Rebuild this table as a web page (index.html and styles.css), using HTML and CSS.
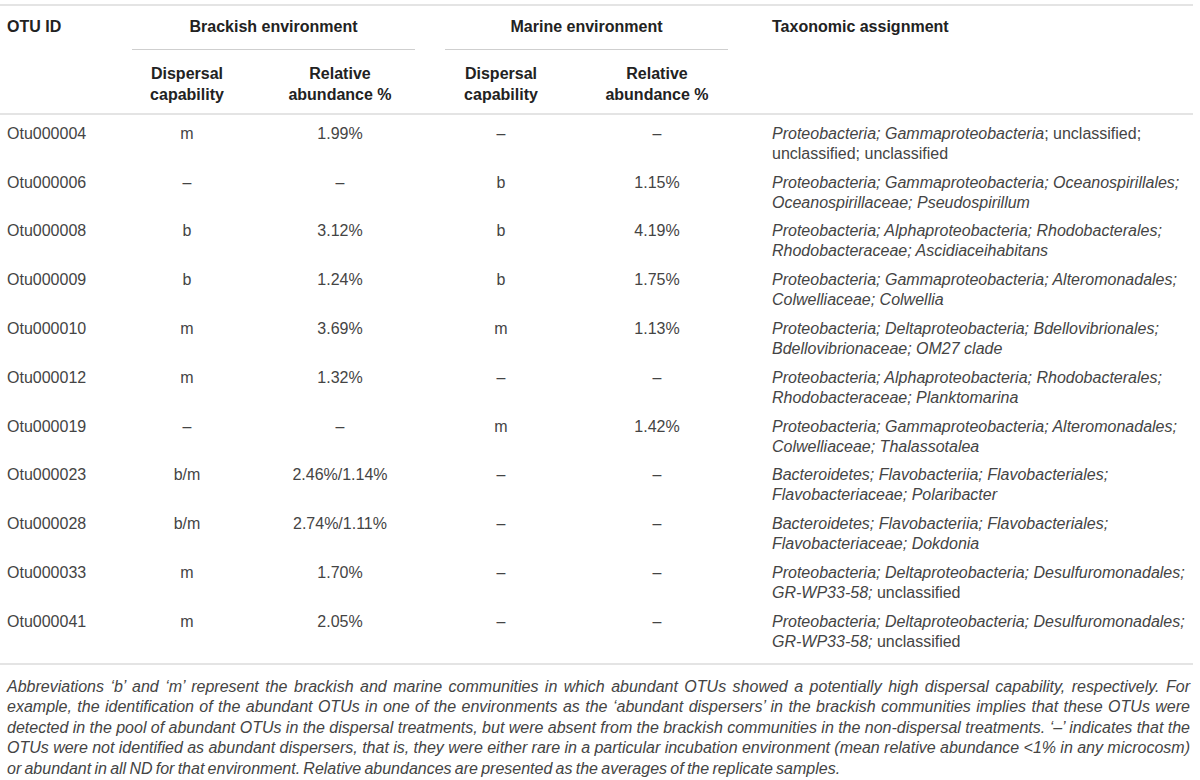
FILE: index.html
```html
<!DOCTYPE html>
<html lang="en">
<head>
    <meta charset="UTF-8">
    <meta name="viewport" content="width=device-width, initial-scale=1.0">
    <title>Abundant dispersers</title>
    <link rel="stylesheet" href="styles.css">
</head>
<body>
    <div class="table">
        <div class="head">
            <div class="otu">OTU ID</div>
            <div class="group brackish">Brackish environment</div>
            <div class="group marine">Marine environment</div>
            <div class="tax">Taxonomic assignment</div>
            <div class="sub b1">Dispersal<br>capability</div>
            <div class="sub b2">Relative<br>abundance %</div>
            <div class="sub m1">Dispersal<br>capability</div>
            <div class="sub m2">Relative<br>abundance %</div>
        </div>

        <div class="rows">
            <div class="row">
                <div class="id">Otu000004</div>
                <div class="b1">m</div>
                <div class="b2">1.99%</div>
                <div class="m1">–</div>
                <div class="m2">–</div>
                <div class="t"><i>Proteobacteria; Gammaproteobacteria</i>; unclassified;<br>unclassified; unclassified</div>
            </div>
            <div class="row">
                <div class="id">Otu000006</div>
                <div class="b1">–</div>
                <div class="b2">–</div>
                <div class="m1">b</div>
                <div class="m2">1.15%</div>
                <div class="t"><i>Proteobacteria; Gammaproteobacteria; Oceanospirillales;<br>Oceanospirillaceae; Pseudospirillum</i></div>
            </div>
            <div class="row">
                <div class="id">Otu000008</div>
                <div class="b1">b</div>
                <div class="b2">3.12%</div>
                <div class="m1">b</div>
                <div class="m2">4.19%</div>
                <div class="t"><i>Proteobacteria; Alphaproteobacteria; Rhodobacterales;<br>Rhodobacteraceae; Ascidiaceihabitans</i></div>
            </div>
            <div class="row">
                <div class="id">Otu000009</div>
                <div class="b1">b</div>
                <div class="b2">1.24%</div>
                <div class="m1">b</div>
                <div class="m2">1.75%</div>
                <div class="t"><i>Proteobacteria; Gammaproteobacteria; Alteromonadales;<br>Colwelliaceae; Colwellia</i></div>
            </div>
            <div class="row">
                <div class="id">Otu000010</div>
                <div class="b1">m</div>
                <div class="b2">3.69%</div>
                <div class="m1">m</div>
                <div class="m2">1.13%</div>
                <div class="t"><i>Proteobacteria; Deltaproteobacteria; Bdellovibrionales;<br>Bdellovibrionaceae; OM27 clade</i></div>
            </div>
            <div class="row">
                <div class="id">Otu000012</div>
                <div class="b1">m</div>
                <div class="b2">1.32%</div>
                <div class="m1">–</div>
                <div class="m2">–</div>
                <div class="t"><i>Proteobacteria; Alphaproteobacteria; Rhodobacterales;<br>Rhodobacteraceae; Planktomarina</i></div>
            </div>
            <div class="row">
                <div class="id">Otu000019</div>
                <div class="b1">–</div>
                <div class="b2">–</div>
                <div class="m1">m</div>
                <div class="m2">1.42%</div>
                <div class="t"><i>Proteobacteria; Gammaproteobacteria; Alteromonadales;<br>Colwelliaceae; Thalassotalea</i></div>
            </div>
            <div class="row">
                <div class="id">Otu000023</div>
                <div class="b1">b/m</div>
                <div class="b2">2.46%/1.14%</div>
                <div class="m1">–</div>
                <div class="m2">–</div>
                <div class="t"><i>Bacteroidetes; Flavobacteriia; Flavobacteriales;<br>Flavobacteriaceae; Polaribacter</i></div>
            </div>
            <div class="row">
                <div class="id">Otu000028</div>
                <div class="b1">b/m</div>
                <div class="b2">2.74%/1.11%</div>
                <div class="m1">–</div>
                <div class="m2">–</div>
                <div class="t"><i>Bacteroidetes; Flavobacteriia; Flavobacteriales;<br>Flavobacteriaceae; Dokdonia</i></div>
            </div>
            <div class="row">
                <div class="id">Otu000033</div>
                <div class="b1">m</div>
                <div class="b2">1.70%</div>
                <div class="m1">–</div>
                <div class="m2">–</div>
                <div class="t"><i>Proteobacteria; Deltaproteobacteria; Desulfuromonadales;<br>GR-WP33-58;</i> unclassified</div>
            </div>
            <div class="row">
                <div class="id">Otu000041</div>
                <div class="b1">m</div>
                <div class="b2">2.05%</div>
                <div class="m1">–</div>
                <div class="m2">–</div>
                <div class="t"><i>Proteobacteria; Deltaproteobacteria; Desulfuromonadales;<br>GR-WP33-58;</i> unclassified</div>
            </div>
        </div>

        <p class="note">
            <span>Abbreviations ‘b’ and ‘m’ represent the brackish and marine communities in which abundant OTUs showed a potentially high dispersal capability, respectively. For</span>
            <span>example, the identification of the abundant OTUs in one of the environments as the ‘abundant dispersers’ in the brackish communities implies that these OTUs were</span>
            <span>detected in the pool of abundant OTUs in the dispersal treatments, but were absent from the brackish communities in the non-dispersal treatments. ‘–’ indicates that the</span>
            <span>OTUs were not identified as abundant dispersers, that is, they were either rare in a particular incubation environment (mean relative abundance &lt;1% in any microcosm)</span>
            <span class="last">or abundant in all ND for that environment. Relative abundances are presented as the averages of the replicate samples.</span>
        </p>
    </div>
</body>
</html>
```

FILE: styles.css
```css
body {
    margin: 0;
    padding-top: 4px;
    background: #fff;
    font-family: "Liberation Sans", Arial, sans-serif;
    font-size: 16px;
    color: #444;
}
.table {
    width: 1193px;
    border-top: 2px solid #e4e4e4;
}
.head,
.row {
    display: grid;
    grid-template-columns: 132px 110px 173px 30px 112px 171px 1fr;
}
.head {
    border-bottom: 2px solid #e4e4e4;
    font-weight: bold;
    color: #222;
}
.head .otu {
    grid-column: 1;
    grid-row: 1 / 3;
    padding: 11px 0 0 7px;
    line-height: 20px;
}
.group {
    grid-row: 1;
    text-align: center;
    line-height: 20px;
    padding: 11px 0 12px;
    border-bottom: 1px solid #cfcfcf;
}
.brackish {
    grid-column: 2 / 4;
}
.marine {
    grid-column: 5 / 7;
}
.tax {
    grid-column: 7;
    grid-row: 1 / 3;
    padding: 11px 0 0 44px;
    line-height: 20px;
}
.sub {
    grid-row: 2;
    line-height: 21px;
    padding: 12.5px 0 8.5px;
}
.b1, .b2, .m1, .m2 {
    text-align: center;
}
.b1 { grid-column: 2; }
.b2 { grid-column: 3; padding-left: 23px; }
.m1 { grid-column: 5; }
.m2 { grid-column: 6; padding-left: 29px; }
.rows {
    padding-bottom: 11px;
    border-bottom: 2px solid #e4e4e4;
}
.row {
    line-height: 20px;
    padding-top: 8.8px;
}
.row .id {
    grid-column: 1;
    padding-left: 7px;
}
.row .t {
    grid-column: 7;
    padding-left: 44px;
    white-space: nowrap;
}
.note {
    margin: 12px 0 0;
    padding: 0 3px 0 7px;
    font-style: italic;
    line-height: 20.5px;
    word-spacing: -1.2px;
}
.note span {
    display: block;
    white-space: nowrap;
    text-align: justify;
    text-align-last: justify;
}
.note .last {
    text-align-last: left;
}
```
